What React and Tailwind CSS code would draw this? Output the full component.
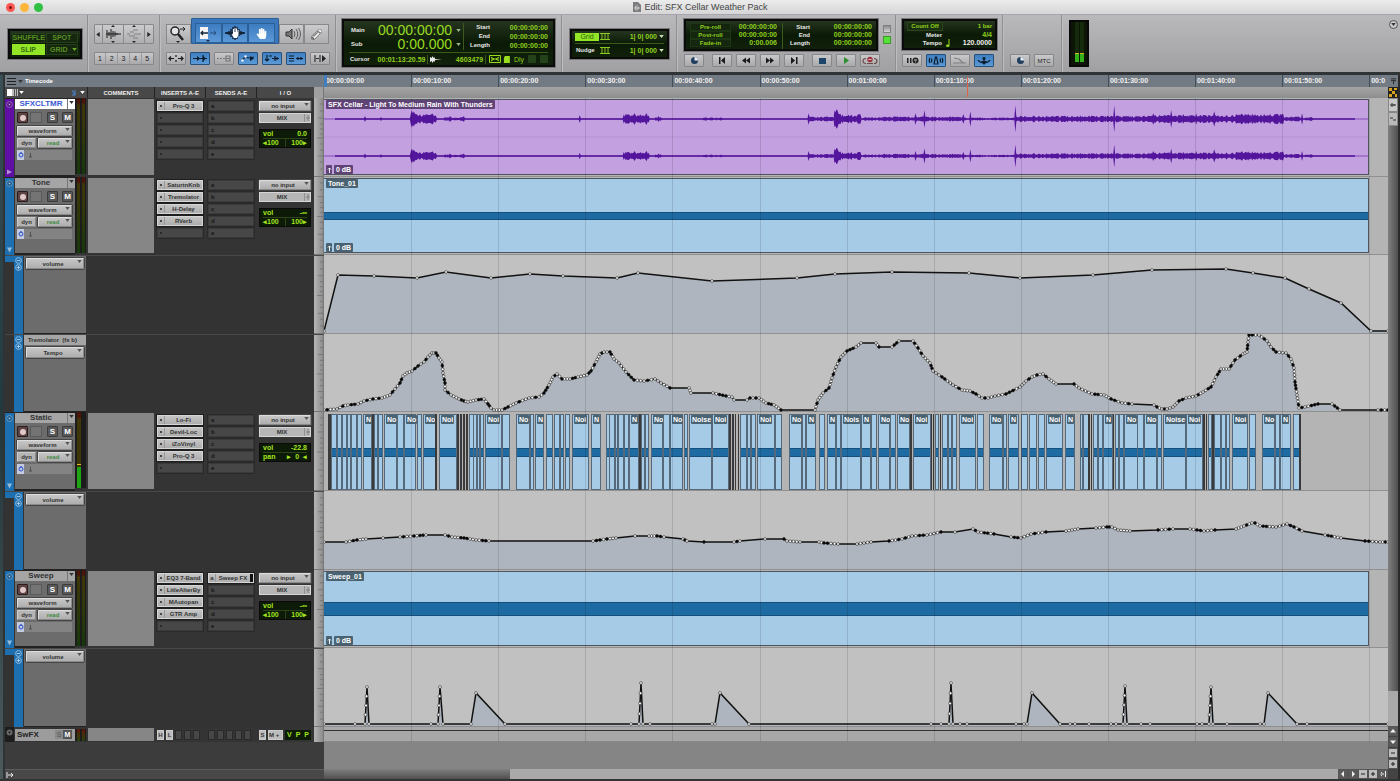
import { FaHandPaper, FaPencilAlt } from "react-icons/fa";

const TIMELINE = 1064;
const TIMES = ["00:00:00:00", "00:00:10:00", "00:00:20:00", "00:00:30:00", "00:00:40:00", "00:00:50:00", "00:01:00:00", "00:01:10:00", "00:01:20:00", "00:01:30:00", "00:01:40:00", "00:01:50:00", "00:0"];
const STEP = 87.1;

const pct = (n) => `${(n / TIMELINE) * 100}%`;

const TONE_VOLUME = [[0, 76], [14, 20], [50, 21], [93, 23], [122, 17], [167, 23], [206, 19], [239, 21], [293, 23], [314, 18], [388, 26], [473, 23], [511, 19], [568, 17], [645, 18], [696, 23], [769, 20], [828, 15], [902, 14], [929, 18], [961, 23], [985, 34], [1017, 48], [1047, 76], [1064, 76]];

const TREMOLO_TEMPO = [[0, 76], [13, 75], [19, 72], [24, 71], [34, 70], [40, 67], [49, 65], [58, 64], [66, 61], [71, 55], [76, 49], [79, 42], [83, 39], [88, 37], [94, 32], [100, 28], [104, 23], [108, 19], [112, 19], [115, 24], [118, 28], [119, 39], [121, 49], [121, 56], [127, 61], [135, 65], [140, 67], [144, 68], [152, 66], [160, 65], [164, 70], [167, 74], [170, 76], [178, 76], [184, 73], [192, 69], [205, 64], [215, 63], [220, 59], [225, 51], [229, 43], [233, 40], [238, 45], [246, 45], [254, 43], [263, 41], [267, 37], [272, 28], [276, 20], [280, 18], [286, 18], [290, 25], [295, 29], [302, 38], [310, 46], [320, 47], [331, 45], [337, 49], [346, 54], [365, 54], [367, 59], [389, 59], [402, 62], [408, 63], [410, 66], [423, 66], [426, 64], [435, 64], [442, 69], [450, 71], [457, 76], [491, 76], [494, 66], [499, 59], [505, 54], [508, 44], [512, 33], [517, 23], [523, 17], [532, 13], [537, 9], [552, 9], [555, 13], [568, 13], [575, 7], [589, 7], [594, 14], [599, 22], [606, 29], [609, 37], [618, 43], [629, 51], [638, 56], [646, 57], [652, 60], [658, 64], [664, 64], [671, 62], [682, 60], [696, 53], [702, 47], [708, 43], [713, 41], [719, 40], [725, 45], [732, 50], [750, 50], [755, 54], [768, 60], [780, 61], [787, 65], [798, 69], [808, 70], [830, 71], [833, 73], [838, 75], [843, 75], [849, 73], [855, 67], [862, 64], [872, 62], [879, 58], [887, 53], [892, 43], [897, 35], [905, 35], [911, 26], [919, 20], [923, 18], [924, 8], [925, 1], [935, 1], [943, 7], [947, 13], [952, 18], [962, 19], [967, 25], [970, 34], [971, 48], [973, 61], [975, 74], [981, 73], [994, 70], [1008, 70], [1016, 76], [1054, 76], [1064, 76]];

const STATIC_VOLUME = [[0, 51], [22, 51], [33, 49], [42, 48], [59, 47], [76, 46], [90, 45], [102, 44], [121, 44], [128, 46], [140, 47], [152, 49], [165, 50], [269, 50], [283, 48], [292, 47], [311, 45], [325, 45], [333, 45], [340, 46], [359, 48], [363, 50], [380, 51], [410, 51], [416, 50], [441, 48], [460, 48], [463, 50], [476, 51], [495, 51], [500, 52], [514, 53], [533, 53], [547, 51], [565, 50], [578, 48], [588, 45], [603, 44], [617, 41], [631, 41], [649, 38], [654, 41], [670, 43], [687, 46], [697, 47], [707, 43], [722, 41], [742, 40], [754, 38], [772, 37], [783, 36], [788, 36], [794, 39], [806, 40], [834, 39], [849, 38], [866, 38], [880, 40], [891, 39], [912, 38], [920, 35], [928, 32], [931, 32], [936, 35], [952, 36], [963, 33], [970, 36], [978, 40], [1001, 44], [1017, 47], [1041, 50], [1056, 51], [1064, 51]];

const SWEEP_VOLUME = [[0, 76], [31, 76], [41, 76], [43, 39], [45, 76], [107, 76], [114, 76], [116, 39], [119, 76], [147, 76], [152, 45], [181, 76], [307, 76], [315, 76], [317, 35], [319, 76], [326, 76], [388, 76], [391, 76], [396, 45], [425, 76], [607, 76], [617, 76], [625, 76], [627, 35], [629, 76], [636, 76], [643, 76], [692, 76], [700, 76], [703, 76], [708, 45], [736, 76], [746, 76], [751, 76], [765, 76], [787, 76], [792, 76], [799, 76], [801, 38], [803, 76], [817, 76], [826, 76], [873, 76], [878, 76], [885, 76], [887, 39], [889, 76], [903, 76], [936, 76], [940, 76], [944, 45], [973, 76], [983, 76], [1064, 76]];

// start, end, and a 1 for crossfade slivers that read as solid dark
const NOISE_CLIPS = [[4, 7, 1], [7, 12], [13, 17], [18, 22], [23, 26], [27, 32], [33, 37], [39, 47], [48, 50, 1], [50, 53], [54, 58], [60, 72], [73, 79], [80, 91], [93, 97], [99, 111], [111, 113, 1], [115, 132], [133, 135, 1], [136, 138, 1], [139, 141, 1], [142, 144, 1], [145, 149], [149, 152], [153, 155], [156, 159], [161, 177], [178, 185], [192, 205], [206, 209], [211, 219], [222, 228], [230, 235], [236, 239], [241, 245], [248, 264], [267, 276], [282, 285], [285, 290], [291, 293], [294, 299], [300, 304], [305, 314], [315, 317, 1], [317, 320], [321, 324], [327, 338], [339, 345], [346, 358], [360, 363], [365, 387], [388, 404], [405, 407, 1], [408, 410, 1], [411, 412, 1], [414, 415, 1], [416, 422], [423, 426], [427, 431], [433, 450], [451, 457], [465, 477], [478, 481], [482, 491], [495, 500], [503, 511], [512, 516], [517, 536], [537, 546], [547, 552], [554, 565], [566, 571], [573, 585], [586, 588, 1], [589, 606], [607, 608, 1], [609, 610, 1], [611, 614], [616, 617, 1], [618, 623], [624, 627], [628, 632], [635, 651], [653, 659], [665, 678], [679, 682], [684, 694], [697, 703], [705, 712], [714, 720], [722, 738], [741, 750], [756, 758], [759, 764], [764, 766, 1], [767, 768, 1], [769, 773], [774, 778], [779, 788], [789, 790, 1], [791, 794], [795, 799], [800, 813], [813, 819], [820, 832], [833, 837], [839, 861], [862, 878], [879, 881, 1], [882, 883, 1], [884, 887], [888, 890, 1], [890, 896], [897, 901], [902, 905], [908, 923], [925, 931], [938, 950], [951, 955], [956, 966], [969, 975], [975, 977, 1]];

function clipLabel(width) {
    if (width < 8) return "";
    if (width < 11) return "N";
    if (width < 15) return "No";
    if (width < 19) return "Noi";
    if (width < 20) return "Nois";
    return "Noise";
}

// [from, to, amplitude]
const ENVELOPE = [[11, 1033, 1], [87, 92, 7], [92, 105, 4], [105, 112, 5], [121, 140, 1.6], [300, 325, 4], [332, 337, 1.8], [380, 398, 1.3], [485, 510, 2], [511, 516, 7], [516, 537, 4.5], [540, 561, 1.6], [561, 642, 2.2], [649, 691, 1.2], [692, 824, 2.8], [824, 912, 3.4], [912, 961, 4.4], [961, 978, 2], [982, 989, 1.8]];
const SPIKES = { 41: 3, 57: 2, 126: 3, 140: 3, 256: 4, 311: 6, 323: 6, 335: 3, 485: 6, 513: 10, 592: 6, 601: 9, 640: 5, 647: 8, 692: 14, 791: 14, 830: 6, 848: 9, 860: 5, 873: 6, 891: 8, 979: 6 };

function wavePath(mid, seed, gain) {
    const amps = [];
    for (let x = 11; x < 1033; x++) {
        let amp = 1;
        ENVELOPE.forEach(([a, b, v]) => {
            if (x >= a && x <= b) amp = v;
        });
        const noise = Math.abs(Math.sin(x * 12.9898 + seed) * 43758.5453) % 1;
        amps.push([x, (SPIKES[x] ?? (amp > 1 ? amp * (0.5 + noise * 0.75) : 0.8)) * gain]);
    }
    const top = amps.map(([x, a]) => `${x} ${(mid - a).toFixed(1)}`);
    const bottom = [...amps].reverse().map(([x, a]) => `${x} ${(mid + a).toFixed(1)}`);
    return `M${top.join("L")}L${bottom.join("L")}Z`;
}

const TRACKS = [
    { name: "SFXCLTMR", color: "bg-[#5f0fa3]", height: "h-[79px]", selected: true, inserts: ["Pro-Q 3"], sends: [], vol: "0.0" },
    { name: "Tone", color: "bg-[#1d6fb0]", height: "h-[78px]", open: true, inserts: ["SaturtnKnb", "Tremolator", "H-Delay", "RVerb"], sends: [], vol: "-∞" },
    { name: "Static", color: "bg-[#1d6fb0]", height: "h-[79px]", open: true, inserts: ["Lo-Fi", "Devil-Loc", "iZoVinyl", "Pro-Q 3"], sends: [], vol: "-22.8", mono: true },
    { name: "Sweep", color: "bg-[#1d6fb0]", height: "h-[78px]", open: true, inserts: ["EQ3 7-Band", "LitleAlterBy", "MAutopan", "GTR Amp"], sends: ["Sweep FX"], vol: "-∞" },
];

function Caret({ className = "fill-[#333]" }) {
    return (
        <svg viewBox="0 0 6 4" className={`h-[3px] w-[5px] shrink-0 ${className}`}>
            <path d="M0 0h6L3 4z" />
        </svg>
    );
}

function Select({ label, value, className = "", text = "text-[#333]" }) {
    return (
        <div className={`relative rounded-[1px] border border-[#ddd] border-r-[#8a8a8a] border-b-[#8a8a8a] bg-linear-to-b from-[#c6c6c6] to-[#aeaeae] shadow-[0_0_0_1px_#444] ${className}`}>
            <select aria-label={label} className={`block h-full w-full appearance-none pr-1 text-center text-[6px] leading-[8px] font-bold outline-none ${text}`}>
                <option>{value}</option>
            </select>
            <span className="pointer-events-none absolute top-px right-px">
                <Caret className="fill-[#555]" />
            </span>
        </div>
    );
}

/* ---------- toolbar ---------- */

function Group({ className = "", children }) {
    return <div className={`flex h-full shrink-0 border-r border-[#8f8f92] shadow-[1px_0_0_#bdbdbf] ${className}`}>{children}</div>;
}

function Lcd({ className = "", children }) {
    return (
        <div className={`border-2 border-[#0a0a0a] bg-linear-to-b from-[#263520] via-[#0b1a06] to-[#10200a] text-[7px] leading-[9px] font-bold text-[#8fd01c] shadow-[0_0_0_1px_#77777a] ${className}`}>
            {children}
        </div>
    );
}

function IconButton({ label, on, children }) {
    return (
        <button
            aria-label={label}
            className={`flex h-[13px] w-[20px] items-center justify-center rounded-[1px] border text-[6px] leading-none font-bold text-[#222] ${
                on ? "border-[#274f7c] bg-linear-to-b from-[#3f7fc0] to-[#5b9ad6]" : "border-[#87878a] bg-linear-to-b from-[#c9c9cb] to-[#a9a9ab]"
            }`}
        >
            {children}
        </button>
    );
}

function Glyph({ d, fill, stroke = "#1a1a1a", children }) {
    return (
        <svg viewBox="0 0 16 9" className="h-[9px] w-[16px] shrink-0">
            {d && <path d={d} fill={fill ?? "none"} stroke={fill ? "none" : stroke} strokeWidth="1.2" />}
            {children}
        </svg>
    );
}

function EditModes() {
    const mode = "flex items-center justify-center gap-px border border-[#24401a] bg-[#16280f] text-[7px] leading-none";
    return (
        <Group className="w-[88px] items-center pl-[8px]">
            <Lcd className="h-[30px] w-[74px] p-[2px]">
                <div className="grid h-full grid-cols-2 gap-px text-[#5b8f22]">
                    <button className={`${mode} text-[6px]`}>
                        <svg viewBox="0 0 4 5" className="h-[5px] w-[4px]"><path d="M0 2h4v3H0z" fill="#5b8f22" /><path d="M1 2V1h2v1" stroke="#5b8f22" fill="none" strokeWidth="0.7" /></svg>
                        SHUFFLE
                    </button>
                    <button className={mode}>SPOT</button>
                    <button className="bg-[#93e626] text-[7px] leading-none text-[#3a6e10]">SLIP</button>
                    <button className={mode}>
                        <span className="flex-1">GRID</span> <Caret className="fill-[#6fae2a]" />
                    </button>
                </div>
            </Lcd>
        </Group>
    );
}

function ZoomControls() {
    const cell = "flex items-center justify-center border-r border-[#8a8a8a] last:border-r-0";
    return (
        <Group className="w-[72px] flex-col items-center pt-[9px]">
            <div className="flex h-[20px] w-[60px] rounded-[1px] border border-[#88888b] bg-linear-to-b from-[#cbcbcd] to-[#aeaeb0]">
                <button aria-label="Zoom out" className={`${cell} w-[8px]`}>
                    <svg viewBox="0 0 4 6" className="h-[5px] w-[4px]"><path d="M4 0v6L0 3z" fill="#222" /></svg>
                </button>
                <button aria-label="Audio zoom" className={`${cell} w-[21px]`}>
                    <svg viewBox="0 0 18 18" className="h-[18px] w-[18px]">
                        <path d="M2 9h15M3 5v8M5 7v4M7 4v10M9 6v6M11 6.500v5M13 8v2" stroke="#1c1c1c" />
                        <path d="M7 2l2-2 2 2zM7 16l2 2 2-2z" fill="#222" />
                    </svg>
                </button>
                <button aria-label="MIDI zoom" className={`${cell} w-[21px]`}>
                    <svg viewBox="0 0 18 18" className="h-[18px] w-[18px]">
                        <path d="M8 5h5M5 7h4M9 9h7M2 9h3M4 11h6M8 13h5" stroke="#808080" />
                        <path d="M7 2l2-2 2 2zM7 16l2 2 2-2z" fill="#222" />
                    </svg>
                </button>
                <button aria-label="Zoom in" className={`${cell} w-[8px]`}>
                    <svg viewBox="0 0 4 6" className="h-[5px] w-[4px]"><path d="M0 0v6l4-3z" fill="#222" /></svg>
                </button>
            </div>
            <div className="mt-[8px] flex h-[13px] w-[60px] rounded-[1px] border border-[#88888b] bg-linear-to-b from-[#c9c9cb] to-[#a9a9ab]">
                {[1, 2, 3, 4, 5].map((n) => (
                    <button key={n} className="flex-1 border-r border-[#9a9a9c] text-[7px] leading-none text-[#222] last:border-r-0">{n}</button>
                ))}
            </div>
        </Group>
    );
}

function EditTools() {
    const light = "flex h-[20px] w-[25px] items-center justify-center border border-[#88888b] bg-linear-to-b from-[#cbcbcd] to-[#aeaeb0]";
    const blue = "flex h-[20px] flex-1 items-center justify-center border border-[#2d5f97] bg-linear-to-b from-[#3d7cc0] to-[#5c99d8]";
    return (
        <Group className="w-[176px] flex-col pt-[3px] pl-[6px]">
            <div className="flex h-[26px] items-end">
                <button aria-label="Zoomer" className={light}>
                    <svg viewBox="0 0 22 18" className="h-[18px] w-[22px]">
                        <circle cx="7" cy="6" r="4" fill="#e4e4e4" stroke="#222" strokeWidth="1.5" />
                        <path d="M10 9l5 6" stroke="#222" strokeWidth="2.5" />
                        <path d="M12 4h5M15 2l2 2-2 2" stroke="#222" fill="none" />
                        <path d="M8 16h4l-2 2z" fill="#222" />
                    </svg>
                </button>
                <div className="flex h-[26px] w-[88px] items-end rounded-t-[1px] border border-[#2d5f97] bg-[#3b78bb] px-[3px]">
                    <button aria-label="Trim" className={blue}>
                        <svg viewBox="0 0 24 18" className="h-[18px] w-[24px]">
                            <rect x="4" y="3" width="8" height="12" fill="#f4f4f4" />
                            <path d="M5 9h7M7 7L5 9l2 2" stroke="#15273d" strokeWidth="1.300" fill="none" />
                            <path d="M14 9h6M18 7l2 2-2 2" stroke="#2a4d78" fill="none" />
                            <path d="M10 16h4l-2 2z" fill="#15273d" />
                        </svg>
                    </button>
                    <button aria-label="Selector" className={blue}>
                        <svg viewBox="0 0 24 18" className="h-[18px] w-[24px]">
                            <path d="M2 9h20M4 8v2M6 7v4M8 5v8M10 3v12M12 2v14M14 3v12M16 5v7M18 7v4M20 8v2" stroke="#111c2a" strokeWidth="1.4" />
                            <path d="M10 9V5h1v3h.5V4h1v4h.5V4.500h1V8h.5V6h1v4.500L14 14h-3l-2-3z" fill="#fff" />
                        </svg>
                    </button>
                    <button aria-label="Grabber" className={blue}>
                        <FaHandPaper className="h-[11px] w-[11px] text-white" />
                    </button>
                </div>
                <button aria-label="Scrubber" className={light}>
                    <svg viewBox="0 0 20 16" className="h-[16px] w-[20px]">
                        <path d="M4 6h3l3-3v10L7 10H4z" fill="#777" stroke="#333" />
                        <path d="M12 5q2 3 0 6M14 3q3.500 5 0 10M16.500 2q4 6 0 12" stroke="#444" strokeWidth="0.800" fill="none" />
                    </svg>
                </button>
                <button aria-label="Pencil" className={light}>
                    <FaPencilAlt className="h-[11px] w-[11px] fill-[#f2f2f2] stroke-[#444] stroke-[30px]" />
                </button>
            </div>
            <div className="mt-[8px] flex gap-[4px]">
                <IconButton label="Zoom toggle"><Glyph d="M1 4.500h5M10 4.500h5M3 2.500l-2 2 2 2M13 2.500l2 2-2 2M8 1v2M8 6v2" /></IconButton>
                <IconButton label="Tab to transients" on>
                    <Glyph d="M1 4.500h14M11 1v7" stroke="#0d1c2e"><path d="M5 2v5l3-2.500zM11 2v5l3-2.500z" fill="#0d1c2e" /></Glyph>
                </IconButton>
                <IconButton label="Mirrored MIDI"><Glyph d="M1 4.500h2M4 4.500h2M7 4.500h2M10 2h4v5h-4zM10 4.500h4" stroke="#777" /></IconButton>
                <IconButton label="Automation follows edit" on>
                    <Glyph d="M2 6.500L5 3l4 1 5-1" stroke="#10233a"><circle cx="2.500" cy="6.500" r="1.300" fill="#eaf3ff" /><circle cx="5.500" cy="2.500" r="1.300" fill="#eaf3ff" /><path d="M10 2v5l4-2.500z" fill="#0d1c2e" /></Glyph>
                </IconButton>
                <IconButton label="Link timeline" on><Glyph d="M3 1v6M1 5l2 2 2-2M5 2h3M8 4.500h7M11 2v5M13 3v3" stroke="#0d1c2e" /></IconButton>
                <IconButton label="Link track" on><Glyph d="M1 2h5M1 4.500h5M1 7h5M8 4.500h7M10 3v3M13 3v3" stroke="#0d1c2e" /></IconButton>
                <IconButton label="Insertion follows playback">
                    <Glyph d="M3 1v7M8 1v7M4 4.500h3" stroke="#333"><path d="M10 1v7l4-3.500z" fill="#222" /></Glyph>
                </IconButton>
            </div>
        </Group>
    );
}

function MainCounter() {
    return (
        <Group className="w-[226px] pt-[4px] pl-[6px]">
            <Lcd className="flex h-[48px] w-[213px] flex-col px-[5px]">
                <div className="flex h-[32px] border-b border-[#3c5a1c]">
                    <div className="flex w-[114px] flex-col pt-[2px]">
                        {[["Main", "00:00:00:00"], ["Sub", "0:00.000"]].map(([label, value]) => (
                            <div key={label} className="flex h-[14px] items-center">
                                <span className="w-[18px] pl-[2px] text-[6px] text-[#e8e8e8]">{label}</span>
                                <span className="flex-1 text-right text-[14px] leading-[14px] font-normal text-[#98dc20]">{value}</span>
                                <span className="w-[11px] pl-[4px]"><Caret className="fill-[#9ab88a]" /></span>
                            </div>
                        ))}
                    </div>
                    <div className="my-[2px] flex flex-1 flex-col border-l border-[#3c5a1c]">
                        {["Start", "End", "Length"].map((label) => (
                            <div key={label} className="flex">
                                <span className="w-[26px] text-right text-[6px] text-[#e8e8e8]">{label}</span>
                                <span className="flex-1 text-right">00:00:00:00</span>
                            </div>
                        ))}
                    </div>
                </div>
                <div className="flex h-[12px] items-center">
                    <span className="w-[26px] pl-px text-[6px] text-[#e8e8e8]">Cursor</span>
                    <span className="w-[54px] border-r border-[#3c5a1c] pr-[2px] text-right">00:01:13:20.59</span>
                    <svg viewBox="0 0 12 9" className="ml-[2px] h-[9px] w-[12px]">
                        <path d="M0 2l2 1V1l2 2 1-1v2l7 .5-7 .5v2L4 6 2 8V6L0 7z" fill="#e8e8e8" />
                    </svg>
                    <span className="w-[44px] border-r border-[#3c5a1c] pr-[2px] text-right">4603479</span>
                    <svg viewBox="0 0 22 9" className="ml-[3px] h-[9px] w-[22px]">
                        <path d="M.5.5h11v7H.5zM2 2l3 2-3 2M10 2L7 4l3 2M2 4h8" fill="none" stroke="#9ade1e" />
                        <path d="M16 1h5v7h-6V3z" fill="#9ade1e" />
                    </svg>
                    <span className="ml-[3px] font-normal">Dly</span>
                    <span className="ml-[4px] h-[8px] w-[8px] rounded-[1px] bg-[#24421a]" />
                    <span className="ml-[4px] h-[8px] w-[8px] rounded-[1px] bg-[#24421a]" />
                </div>
            </Lcd>
        </Group>
    );
}

function GridNudge() {
    const row = "flex h-[13px] items-center";
    return (
        <Group className="w-[115px] items-center pl-[8px]">
            <Lcd className="h-[30px] w-[99px] px-[3px]">
                <div className={`${row} border-b border-[#3c5a1c]`}>
                    <button className="h-[8px] w-[24px] bg-[#93e626] text-[7px] leading-[8px] font-normal text-[#2c5a0c]">Grid</button>
                    <GridIcon />
                    <span className="flex-1 text-right">1| 0| 000</span>
                    <span className="ml-[2px]"><Caret className="fill-[#cfe0c0]" /></span>
                </div>
                <div className={row}>
                    <span className="w-[24px] pl-px text-[6px] text-[#e8e8e8]">Nudge</span>
                    <GridIcon />
                    <span className="flex-1 text-right">1| 0| 000</span>
                    <span className="ml-[2px]"><Caret className="fill-[#cfe0c0]" /></span>
                </div>
            </Lcd>
        </Group>
    );
}

function GridIcon() {
    return (
        <svg viewBox="0 0 10 7" className="ml-px h-[7px] w-[10px]">
            <path d="M0 .5h10M0 6.500h10M2 0v7M5 0v7M8 0v7" stroke="#8cc822" />
        </svg>
    );
}

function Transport() {
    return (
        <Group className="w-[219px] flex-col pt-[4px] pl-[7px]">
            <div className="flex">
                <Lcd className="flex h-[32px] w-[194px] px-[4px] pt-[2px]">
                    <div className="flex w-[93px] flex-col border-r border-[#3c5a1c]">
                        {[["Pre-roll", "00:00:00:00"], ["Post-roll", "00:00:00:00"], ["Fade-in", "0:00.006"]].map(([label, value]) => (
                            <div key={label} className="flex h-[8px] items-center">
                                <button className="h-[8px] w-[41px] border border-[#1c3512] bg-[#14260d] text-center text-[6px] leading-[6px]">{label}</button>
                                <span className="flex-1 pr-[5px] text-right leading-[8px]">{value}</span>
                            </div>
                        ))}
                    </div>
                    <div className="flex flex-1 flex-col">
                        {["Start", "End", "Length"].map((label) => (
                            <div key={label} className="flex h-[8px] leading-[8px]">
                                <span className="w-[27px] text-right text-[6px] text-[#e8e8e8]">{label}</span>
                                <span className="flex-1 text-right">00:00:00:00</span>
                            </div>
                        ))}
                    </div>
                </Lcd>
                <div className="mt-[6px] ml-[5px] flex flex-col gap-[3px]">
                    <span className="h-[8px] w-[8px] border border-[#808083] bg-linear-to-b from-[#8c8c8e] to-[#d4d4d6]" />
                    <span className="h-[8px] w-[8px] border border-[#3f9a2c] bg-[#55e03a]" />
                </div>
            </div>
            <div className="mt-[3px] flex gap-[4px]">
                <IconButton label="Online"><ClockIcon /></IconButton>
                <span className="w-0" />
                <IconButton label="Return to zero"><Glyph d="M5 1h1.500v7H5zM11 1v7L7 4.500z" fill="#1a1a1a" /></IconButton>
                <IconButton label="Rewind"><Glyph d="M8 1.500v6L4 4.500zM12 1.500v6L8 4.500z" fill="#1a1a1a" /></IconButton>
                <IconButton label="Fast forward"><Glyph d="M4 1.500v6l4-3zM8 1.500v6l4-3z" fill="#1a1a1a" /></IconButton>
                <IconButton label="Go to end"><Glyph d="M10 1h1.500v7H10zM5 1v7l4-3.500z" fill="#1a1a1a" /></IconButton>
                <span className="w-0" />
                <IconButton label="Stop"><span className="h-[6px] w-[7px] bg-[#1c4468]" /></IconButton>
                <IconButton label="Play"><Glyph d="M6 1v7l5-3.500z" fill="#2a8f2c" /></IconButton>
                <IconButton label="Record">
                    <Glyph d="M4 7.500Q1 7.500 1 5t3-2.500M12 7.500q3 0 3-2.500t-3-2.500M5 7.500h6" stroke="#6b4a4a"><circle cx="8" cy="3.500" r="2.700" fill="#9c2f40" /><path d="M6.500 3.500h3" stroke="#e0b8b8" /></Glyph>
                </IconButton>
            </div>
        </Group>
    );
}

function ClockIcon() {
    return (
        <svg viewBox="0 0 9 9" className="h-[9px] w-[9px]">
            <circle cx="4.500" cy="4.500" r="3.500" fill="#1f3d5c" />
            <path d="M4.500 4.500V1A3.500 3.500 0 0 1 8 4.500z" fill="#e8eef4" />
        </svg>
    );
}

function TempoPanel() {
    return (
        <Group className="w-[107px] flex-col pt-[4px] pl-[6px]">
            <Lcd className="h-[31px] w-[95px] px-[3px] pt-px">
                <div className="flex justify-between leading-[9px]">
                    <button className="h-[9px] w-[36px] border border-[#2a451c] bg-[#1a2f12] text-[6px] leading-[7px]">Count Off</button>
                    <span className="text-[6px]">1 bar</span>
                </div>
                <div className="flex justify-between leading-[8px]">
                    <span className="w-[35px] text-right text-[6px] text-[#e8e8e8]">Meter</span>
                    <span>4/4</span>
                </div>
                <div className="flex items-center justify-between leading-[8px] text-[#f0f0f0]">
                    <span className="w-[35px] text-right text-[6px]">Tempo</span>
                    <svg viewBox="0 0 4 8" className="mr-[8px] h-[8px] w-[4px]"><path d="M3 0v6.500" stroke="#9ade1e" /><ellipse cx="1.700" cy="6.700" rx="1.700" ry="1.200" fill="#9ade1e" /></svg>
                    <span>120.0000</span>
                </div>
            </Lcd>
            <div className="mt-[4px] flex gap-[4px]">
                <IconButton label="Wait for note"><Glyph d="M3 2h1.500v5H3zM6 2h1.500v5H6z" fill="#222"><circle cx="11.500" cy="4.500" r="3" fill="#222" /><path d="M10 4h3M11 6h1" stroke="#ccc" /></Glyph></IconButton>
                <IconButton label="Metronome" on><Glyph d="M6 8h4L8.500 1h-1zM4 2.500q-1 2 0 4M2 2q-1.500 2.500 0 5M12 2.500q1 2 0 4M14 2q1.500 2.500 0 5" stroke="#0d1c2e" /></IconButton>
                <IconButton label="MIDI merge"><Glyph d="M1 7h13M2 2l5 1 4 4" stroke="#808083" /></IconButton>
                <IconButton label="Conductor" on><Glyph d="M2 4q2 3 6 3t6-3M8 1v6" stroke="#0d1c2e"><circle cx="8" cy="2.500" r="1.500" fill="#0d1c2e" /><path d="M5 5h6L8 9z" fill="#0d1c2e" /></Glyph></IconButton>
            </div>
        </Group>
    );
}

function Toolbar() {
    return (
        <div className="flex h-[57px] bg-linear-to-b from-[#b9b9bc] to-[#a0a0a3]">
            <EditModes />
            <ZoomControls />
            <EditTools />
            <MainCounter />
            <GridNudge />
            <Transport />
            <TempoPanel />
            <Group className="w-[59px] items-end gap-[4px] pb-[5px] pl-[7px]">
                <IconButton label="Sync"><ClockIcon /></IconButton>
                <IconButton label="Generate MTC"><span className="font-normal">MTC</span></IconButton>
            </Group>
            <div className="flex min-w-0 flex-1 justify-between pt-[5px] pl-[7px]">
                <div className="flex h-[47px] w-[20px] items-end justify-center gap-px border-2 border-[#080808] bg-[#0c1506] px-[3px] pb-[3px]">
                    <span className="flex h-full w-[4px] items-end bg-[#162a0c]"><span className="h-[9px] w-full border-t border-[#d8b020] bg-[#34b01c]" /></span>
                    <span className="flex h-full w-[4px] items-end bg-[#162a0c]"><span className="h-[9px] w-full border-t border-[#d8b020] bg-[#34b01c]" /></span>
                </div>
                <button aria-label="Toolbar menu" className="mr-[2px] flex h-[9px] w-[9px] items-center justify-center rounded-full border border-[#555] bg-[#c8c8c8]">
                    <Caret />
                </button>
            </div>
        </div>
    );
}

/* ---------- track headers ---------- */

function Circle({ sign }) {
    return (
        <button aria-label={sign === "+" ? "Add lane" : "Remove lane"} className="block">
            <svg viewBox="0 0 8 8" className="h-[7px] w-[7px]">
                <circle cx="4" cy="4" r="3.300" fill="none" stroke="#9fc4e2" />
                <path d={sign === "+" ? "M2 4h4M4 2v4" : "M2 4h4"} stroke="#b7d5ec" />
            </svg>
        </button>
    );
}

function Meter({ mono }) {
    if (mono) {
        return (
            <div className="flex h-[76px] w-[11px] shrink-0 bg-[#1c1c1c] pl-[2px]">
                <div className="flex h-full w-[4px] flex-col justify-end bg-linear-to-b from-[#4a1408] from-6% via-[#3f3608] via-10% to-[#3a3408]">
                    <span className="mb-[2px] h-px bg-[#d8c020]" />
                    <span className="h-[21px] bg-[#1fa512]" />
                </div>
            </div>
        );
    }
    return (
        <div className="flex h-[76px] w-[11px] shrink-0 justify-center gap-[2px] bg-[#1c1c1c]">
            <div className="h-full w-[3px] bg-linear-to-b from-[#4a1408] from-6% via-[#3f3608] via-10% to-[#14380c]" />
            <div className="h-full w-[3px] bg-linear-to-b from-[#4a1408] from-6% via-[#3f3608] via-10% to-[#14380c]" />
        </div>
    );
}

function ScaleColumn() {
    return (
        <div className="w-[10px] shrink-0 border-r border-b border-[#777] bg-linear-to-r from-[#b5b5b5] to-[#8c8c8c]">
            <svg viewBox="0 0 9 78" preserveAspectRatio="none" className="h-full w-full">
                <path d="M6 6h3M6 13h3M4 20h5M6 26h3M6 31h3M6 36h3M3 40h6M6 46h3M6 52h3M4 58h5M6 64h3M6 71h3" stroke="#666" strokeWidth="0.600" />
            </svg>
        </div>
    );
}

function Slot({ label, text, send }) {
    const mark = send ? label : <span className="block h-[2px] w-[2px] rounded-full bg-[#222]" />;
    if (!text) {
        return (
            <button aria-label={`Slot ${label}`} className="flex h-[10px] w-full items-center border border-[#3a3a3a] bg-[#474747] pl-[2px] text-[6px] leading-[8px] font-bold text-[#161616] shadow-[0_0_0_1px_#2a2a2a]">
                {mark}
            </button>
        );
    }
    return (
        <button className="flex h-[10px] w-full items-center border border-[#d6d6d6] bg-linear-to-b from-[#c4c4c4] to-[#adadad] text-[6px] leading-[8px] font-bold text-[#333] shadow-[0_0_0_1px_#1e1e1e]">
            <span className="flex h-full w-[7px] shrink-0 items-center justify-center border-r border-[#999]">{mark}</span>
            <span className="flex-1 text-center whitespace-nowrap">{text}</span>
            {send && <span className="h-[8px] w-[3px] bg-[#111]" />}
        </button>
    );
}

function TrackHeader({ track }) {
    const rows = ["a", "b", "c", "d", "e"];
    return (
        <div className={`flex w-[319px] shrink-0 bg-[#343434] ${track.height}`}>
            <div className={`flex w-[9px] shrink-0 flex-col items-center justify-between border-t border-[#222] py-[2px] ${track.color}`}>
                <svg viewBox="0 0 8 8" className="h-[7px] w-[7px]"><circle cx="4" cy="4" r="3.300" fill="#00000033" stroke="#ffffff66" /><path d="M2.500 3h3L4 5.500z" fill="#ffffffaa" /></svg>
                <svg viewBox="0 0 6 6" className="h-[6px] w-[5px]"><path d={track.open ? "M0 0h6L3 6z" : "M0 0l6 3-6 3z"} fill="#ffffff88" /></svg>
            </div>
            <div className="ml-px flex w-[60px] shrink-0 flex-col bg-[#6c6c6c] shadow-[inset_0_-2px_0_#222,inset_0_1px_0_#222]">
                <div className={`mt-px flex h-[10px] items-center ${track.selected ? "bg-white" : "bg-[#a5a5a5]"}`}>
                    <span className={`flex-1 text-center text-[8px] leading-[10px] font-bold ${track.selected ? "text-[#3a5ad2]" : "text-[#333]"}`}>{track.name}</span>
                    <span className="flex h-full items-start border-l border-[#777] px-px pt-[2px]"><Caret /></span>
                </div>
                <div className="mt-[3px] flex h-[11px] items-center pl-[2px]">
                    <button aria-label="Record enable" className="flex h-[11px] w-[11px] items-center justify-center rounded-[1px] border border-[#2c1c1c] bg-[#5c4444]">
                        <span className="h-[6px] w-[6px] rounded-full bg-[#e0c8c8]" />
                    </button>
                    <button aria-label="Input monitor" className="ml-[2px] h-[11px] w-[12px] border border-[#5a5a5a] bg-[#747474]" />
                    <button className="ml-[5px] h-[11px] w-[11px] rounded-[1px] border border-[#3c3c3c] bg-[#585858] text-[8px] leading-[9px] font-bold text-white">S</button>
                    <button className="ml-[4px] h-[11px] w-[11px] rounded-[1px] border border-[#3c3c3c] bg-[#585858] text-[8px] leading-[9px] font-bold text-white">M</button>
                </div>
                <div className="mt-[3px] pl-[2px]"><Select label="Track view" value="waveform" className="h-[10px] w-[55px]" /></div>
                <div className="mt-[2px] flex gap-[2px] pl-[2px]">
                    <button className="h-[10px] w-[19px] border border-[#ccc] border-r-[#888] border-b-[#888] bg-[#b4b4b4] text-[6px] leading-[8px] font-bold text-[#333]">dyn</button>
                    <Select label="Automation mode" value="read" className="h-[10px] w-[34px]" text="text-[#3f8a3f]" />
                </div>
                <div className="mt-[2px] flex h-[10px] pl-[2px]">
                    <button aria-label="Timebase" className="flex h-[10px] w-[7px] items-center justify-center bg-[#c4cbe0]">
                        <svg viewBox="0 0 6 8" className="h-[8px] w-[6px]"><circle cx="3" cy="4" r="2" fill="none" stroke="#2d50c8" /><path d="M3 1v2" stroke="#2d50c8" /></svg>
                    </button>
                    <span className="flex w-[48px] items-center bg-[#838383] pl-[4px]">
                        <svg viewBox="0 0 5 6" className="h-[6px] w-[5px]"><path d="M1 5h3M2.500 1v4" stroke="#444" strokeWidth="0.800" /></svg>
                    </span>
                </div>
            </div>
            <Meter mono={track.mono} />
            <div className="mt-px mb-[2px] ml-[2px] w-[66px] shrink-0 bg-[#868686]" />
            <div className="ml-[3px] flex w-[46px] shrink-0 flex-col gap-[2px] pt-[3px]">
                {rows.map((r, i) => <Slot key={r} label={r} text={track.inserts[i]} />)}
            </div>
            <div className="ml-[5px] flex w-[46px] shrink-0 flex-col gap-[2px] pt-[3px]">
                {rows.map((r, i) => <Slot key={r} label={r} text={track.sends[i]} send />)}
            </div>
            <div className="ml-[5px] flex w-[52px] shrink-0 flex-col pt-[3px]">
                <Select label="Input" value="no input" className="h-[10px]" />
                <button className="mt-[2px] flex h-[10px] items-center border border-[#d6d6d6] bg-[#b6b6b6] text-[6px] leading-[8px] font-bold text-[#333]">
                    <span className="flex-1">MIX</span>
                    <span className="flex h-full w-[6px] items-center justify-center border-l border-[#909090]">
                        <svg viewBox="0 0 4 6" className="h-[6px] w-[4px]"><path d="M2 0v6M0 3h4" stroke="#777" strokeWidth="0.800" /></svg>
                    </span>
                </button>
                <div className="mt-[6px] h-[19px] border border-[#0a0a0a] bg-[#0e1a08] px-[3px] text-[7px] leading-[8px] font-bold text-[#a2e61e]">
                    <div className="flex h-[9px] items-center justify-between border-b border-[#2c4416]"><span>vol</span><span>{track.vol}</span></div>
                    {track.mono ? (
                        <div className="flex justify-between"><span>pan</span><span>▸&nbsp; 0 &nbsp;◂</span></div>
                    ) : (
                        <div className="flex justify-between"><span>◂100</span><span className="h-[8px] w-px bg-[#2c4416]" /><span>100▸</span></div>
                    )}
                </div>
            </div>
            <div className="flex-1" />
            <ScaleColumn />
        </div>
    );
}

function AutomationHeader({ title, param, height }) {
    return (
        <div className={`flex w-[319px] shrink-0 border-t border-[#484848] bg-[#333] ${height}`}>
            <div className="w-[9px] shrink-0"><div className={`h-[6px] w-full ${title ? "bg-[#333]" : "bg-[#1d6fb0]"}`} /></div>
            <div className="flex w-[9px] shrink-0 flex-col items-center bg-[#1d6fb0] pt-px">
                <Circle sign="-" />
                <Circle sign="+" />
            </div>
            <div className="ml-px w-[62px] shrink-0 bg-[#6c6c6c] shadow-[inset_0_-1px_0_#222]">
                {title && <div className="h-[10px] bg-[#a5a5a5] pl-[4px] text-[6px] leading-[10px] font-bold whitespace-pre text-[#333]">{title}</div>}
                <div className="px-[2px] pt-[2px]"><Select label="Automation parameter" value={param} className="h-[11px] w-[58px]" /></div>
            </div>
            <div className="flex-1" />
            <ScaleColumn />
        </div>
    );
}

/* ---------- timeline lanes ---------- */

function Lane({ dim, children }) {
    return <div className={`relative min-w-0 flex-1 shadow-[inset_0_-1px_0_#909090] ${dim ? "bg-[#b4b4b4]" : "bg-[#c1c1c1]"}`}>{children}</div>;
}

function markers(points, dense) {
    const out = [];
    points.forEach(([x, y], i) => {
        out.push([x, y, dense && i % 4 === 2]);
        const next = points[i + 1];
        if (!next) return;
        const dx = next[0] - x;
        const dy = next[1] - y;
        const len = Math.hypot(dx, dy);
        let n = Math.floor(len / 4);
        if (!dense) {
            // breakpoints climbing a narrow spike
            if (dx > 3 || dy > -30) return;
            n = 3;
        } else if (len > 17 || (Math.abs(dy) < 1 && len > 12)) {
            return;
        }
        for (let k = 1; k <= n; k++) {
            const f = k / (n + 1);
            out.push([x + dx * f, y + dy * f, dense && (i * 3 + k) % 5 < 2]);
        }
    });
    return out;
}

function Automation({ points, height, dense }) {
    const line = points.map(([x, y]) => `${x},${y}`).join(" ");
    return (
        <Lane>
            <svg viewBox={`0 0 ${TIMELINE} ${height}`} preserveAspectRatio="none" className="absolute inset-0 h-full w-full">
                <polygon points={`0,${height - 1} ${line} ${TIMELINE},${height - 1}`} fill="#aeb5be" />
                <polyline points={line} fill="none" stroke="#111" strokeWidth="1.500" />
                {markers(points, dense).map(([x, y, solid], i) => (
                    <circle key={i} cx={x} cy={y} r="1.400" fill={solid ? "#000" : "#fff"} stroke="#222" strokeWidth="0.600" />
                ))}
            </svg>
        </Lane>
    );
}

function Tag({ children, tone = "bg-[#4a6373]" }) {
    return <span className={`rounded-[1px] px-[2px] text-[7px] leading-[9px] font-bold whitespace-nowrap text-white ${tone}`}>{children}</span>;
}

function Clip({ name, band, purple }) {
    const tone = purple ? "bg-[#5f4376]" : "bg-[#4a6373]";
    return (
        <Lane dim>
            <div
                className={`absolute top-px bottom-[2px] left-0 flex flex-col justify-between overflow-hidden border-t border-r border-b border-[#4f5560] ${purple ? "bg-[#c3a0e0]" : "bg-[#a6cbe6]"}`}
                style={{ width: pct(1045) }}
            >
                {purple ? (
                    <svg viewBox="0 0 1045 76" preserveAspectRatio="none" className="absolute inset-0 h-full w-full">
                        <path d="M0 38h1045" stroke="#b190d0" strokeWidth="0.700" />
                        <path d="M0 19.500h1045M0 57.500h1045" stroke="#53159b" strokeWidth="0.600" />
                        <path d={wavePath(19.5, 1, 1)} fill="#53159b" />
                        <path d={wavePath(57.5, 1, 0.85)} fill="#53159b" />
                    </svg>
                ) : (
                    <div className={`absolute inset-x-0 top-1/2 -translate-y-1/2 border-y border-[#174f7c] bg-[#1e6aa3] ${band}`} />
                )}
                <div className="relative flex pl-[2px]"><Tag tone={tone}>{name}</Tag></div>
                <div className="relative flex gap-[2px] pl-[2px]">
                    <span className={`flex w-[6px] items-center justify-center rounded-[1px] ${tone}`}>
                        <svg viewBox="0 0 5 8" className="h-[8px] w-[5px]"><path d="M2.500 2v5M1 3.500L2.500 2 4 3.500" fill="none" stroke="#fff" strokeWidth="0.900" /></svg>
                    </span>
                    <Tag tone={tone}>0 dB</Tag>
                </div>
            </div>
        </Lane>
    );
}

function NoiseClips() {
    return (
        <Lane dim>
            {NOISE_CLIPS.map(([from, to, dark]) => {
                const label = clipLabel(to - from);
                return (
                    <div
                        key={from}
                        className={`absolute top-[2px] bottom-px flex items-center ${dark ? "bg-[#3a3a3a]" : "border border-[#55697a] bg-[#a6cbe6]"}`}
                        style={{ left: pct(from), width: pct(dark ? to - from : to - from + 0.7) }}
                    >
                        {!dark && <div className="h-[9px] w-full border-y border-[#174f7c] bg-[#1e6aa3]" />}
                        {label && <span className="absolute top-0 left-px rounded-[1px] bg-[#4a6373] px-px text-[7px] leading-[9px] font-bold text-white">{label}</span>}
                    </div>
                );
            })}
        </Lane>
    );
}

function Ruler() {
    return (
        <div className="relative h-[12px] min-w-0 flex-1 overflow-hidden bg-[#727b83]">
            {TIMES.map((time, i) => (
                <span key={time} className="absolute top-0 h-full border-l border-[#454c52] pl-px text-[7px] leading-[11px] font-bold text-[#f2f2f2]" style={{ left: pct(i * STEP) }}>
                    {time}
                </span>
            ))}
        </div>
    );
}

function GridLines() {
    return (
        <div className="pointer-events-none absolute inset-y-0 right-0 left-[319px]">
            {TIMES.slice(1).map((time, i) => (
                <span key={time} className="absolute inset-y-0 w-px bg-black/12" style={{ left: pct((i + 1) * STEP) }} />
            ))}
        </div>
    );
}

function AuxTrack() {
    const mini = "h-[10px] border border-[#ccc] bg-[#bcbcbc] text-[6px] leading-[8px] font-bold text-[#333]";
    return (
        <div className="flex h-[15px]">
            <div className="flex w-[319px] shrink-0 items-center bg-[#343434]">
                <div className="flex h-full w-[9px] shrink-0 justify-center bg-[#1d1d1d] pt-[2px]">
                    <svg viewBox="0 0 8 8" className="h-[7px] w-[7px]"><circle cx="4" cy="4" r="3.500" fill="#666" /><path d="M2.500 3h3L4 5.500z" fill="#111" /></svg>
                </div>
                <div className="ml-px flex h-[12px] w-[60px] shrink-0 items-center bg-[#9c9c9c] pl-[2px]">
                    <span className="flex-1 text-[8px] leading-[10px] font-bold text-[#222]">SwFX</span>
                    <button className="h-[9px] w-[8px] bg-[#8a8a8a] text-[7px] leading-[9px] text-[#555]">S</button>
                    <button className="mr-[3px] h-[9px] w-[9px] bg-[#555] text-[7px] leading-[9px] font-bold text-white">M</button>
                </div>
                <div className="flex h-[12px] w-[11px] shrink-0 justify-center gap-[2px] bg-[#1c1c1c]">
                    <span className="w-[3px] bg-linear-to-b from-[#5a1408] to-[#26400c]" />
                    <span className="w-[3px] bg-linear-to-b from-[#5a1408] to-[#26400c]" />
                </div>
                <div className="ml-[2px] h-[13px] w-[66px] shrink-0 bg-[#868686]" />
                <div className="ml-[3px] flex w-[46px] shrink-0 gap-[2px]">
                    <button className={`${mini} w-[7px]`}>H</button>
                    <button className={`${mini} w-[7px]`}>L</button>
                    {[1, 2, 3].map((n) => <span key={n} className="h-[10px] w-[7px] border border-[#2a2a2a] bg-[#474747]" />)}
                </div>
                <div className="ml-[5px] flex w-[46px] shrink-0 gap-[2px]">
                    {[1, 2, 3, 4, 5].map((n) => <span key={n} className="h-[10px] w-[7px] border border-[#2a2a2a] bg-[#474747]" />)}
                </div>
                <div className="ml-[5px] flex w-[52px] shrink-0 items-center gap-[2px]">
                    <button className={`${mini} w-[7px]`}>S</button>
                    <button className={`${mini} w-[15px] text-left`}>M +</button>
                    <span className="flex h-[10px] flex-1 justify-around bg-[#0e1a08] text-[7px] leading-[10px] font-bold text-[#a2e61e]"><span>V</span><span>P</span><span>P</span></span>
                </div>
                <div className="flex-1" />
                <div className="h-full w-[10px] border-r border-[#777] bg-linear-to-r from-[#b5b5b5] to-[#8c8c8c]" />
            </div>
            <div className="min-w-0 flex-1 border-b border-[#888] bg-[#a8a8a8] pt-[3px]"><div className="h-px bg-[#33332e]" /></div>
        </div>
    );
}

function EditWindow() {
    const head = "shrink-0 border-l border-[#222] bg-[#484848] text-center";
    return (
        <div className="flex min-w-0 flex-1 flex-col">
            <div className="flex h-[12px]">
                <div className="flex w-[319px] shrink-0 items-center gap-[2px] bg-[#727b83] pl-[2px] text-[6px] leading-[12px] font-bold text-white">
                    <svg viewBox="0 0 9 7" className="h-[7px] w-[9px]"><path d="M0 .5h9M0 3.500h9M0 6.500h9" stroke="#222" strokeWidth="1.200" /></svg>
                    <Caret />
                    <span className="flex-1">Timecode</span>
                </div>
                <Ruler />
            </div>
            <div className="flex h-[11px] text-[6px] leading-[12px] font-bold text-[#eee]">
                <div className="flex w-[82px] shrink-0 items-center justify-between bg-[#484848] px-[2px]">
                    <span className="flex items-center gap-px">
                        <svg viewBox="0 0 11 7" className="h-[7px] w-[11px]"><path d="M0 0h11v7H0z" fill="#bbb" /><path d="M0 0h5v7H0z" fill="#fff" /><path d="M7.500 0v7M9.500 0v7" stroke="#555" /></svg>
                        <Caret className="fill-white" />
                    </span>
                    <span className="flex items-center gap-[4px]">
                        <svg viewBox="0 0 5 7" className="h-[7px] w-[5px]"><path d="M1 1l3 5M4 1v5M1 6h3" stroke="#4a86d8" fill="none" /></svg>
                        <Caret className="fill-white" />
                    </span>
                </div>
                <span className={`${head} w-[67px]`}>COMMENTS</span>
                <span className={`${head} w-[51px]`}>INSERTS A-E</span>
                <span className={`${head} w-[51px]`}>SENDS A-E</span>
                <span className={`${head} w-[58px]`}>I / O</span>
                <div className="w-[10px] shrink-0 border-r border-[#777] bg-[#a0a0a0]" />
                <div className="min-w-0 flex-1 bg-linear-to-b from-[#a4a4a4] to-[#8e8e8e]" />
            </div>
            <div className="relative">
                <div className="flex"><TrackHeader track={TRACKS[0]} /><Clip name="SFX Cellar - Light To Medium Rain With Thunders" purple /></div>
                <div className="flex"><TrackHeader track={TRACKS[1]} /><Clip name="Tone_01" band="h-[8px]" /></div>
                <div className="flex"><AutomationHeader param="volume" height="h-[79px]" /><Automation points={TONE_VOLUME} height={79} /></div>
                <div className="flex"><AutomationHeader title="Tremolator  (fx b)" param="Tempo" height="h-[78px]" /><Automation points={TREMOLO_TEMPO} height={78} dense /></div>
                <div className="flex"><TrackHeader track={TRACKS[2]} /><NoiseClips /></div>
                <div className="flex"><AutomationHeader param="volume" height="h-[79px]" /><Automation points={STATIC_VOLUME} height={79} dense /></div>
                <div className="flex"><TrackHeader track={TRACKS[3]} /><Clip name="Sweep_01" band="h-[14px]" /></div>
                <div className="flex"><AutomationHeader param="volume" height="h-[79px]" /><Automation points={SWEEP_VOLUME} height={79} /></div>
                <AuxTrack />
                <GridLines />
            </div>
            <div className="flex min-h-[27px] flex-1">
                <div className="w-[319px] shrink-0 bg-[#3c3c3c]" />
                <div className="flex-1 bg-[#858585]" />
            </div>
            <div className="flex h-[10px]">
                <div className="flex w-[319px] shrink-0 items-center border-t border-[#5c5c5c] bg-[#484848] pl-px">
                    <svg viewBox="0 0 8 8" className="h-[8px] w-[8px]"><path d="M1 1v6M2 4h5M5 2l2 2-2 2" stroke="#eee" fill="none" /></svg>
                </div>
                <div className="flex min-w-0 flex-1 bg-[#a9a9a9]">
                    <div className="w-[17.5%] shrink-0 bg-linear-to-b from-[#808080] to-[#505050]" />
                    <div className="flex-1" />
                    <ScrollButton label="Scroll left" d="M5 1v6L2 4z" dark />
                    <ScrollButton label="Scroll right" d="M3 1v6l3-3z" dark />
                    <ScrollButton label="Zoom out horizontally" d="M2 3.500h4v1H2z" />
                    <ScrollButton label="Zoom in horizontally" d="M3.500 2h1v1.500H6v1H4.500V6h-1V4.500H2v-1h1.500z" />
                    <ScrollButton label="Show lists" d="M1 3.500h4v1H1zM3 1.500L1 4l2 2.500zM6 1h1v6H6z" dark />
                </div>
            </div>
        </div>
    );
}

function ScrollButton({ label, d, dark }) {
    return (
        <button aria-label={label} className={`flex h-[10px] w-[10px] shrink-0 items-center justify-center border border-[#555] ${dark ? "bg-[#5a5a5a]" : "bg-[#bdbdbd]"}`}>
            <svg viewBox="0 0 8 8" className="h-[8px] w-[8px] shrink-0"><path d={d} fill={dark ? "#f0f0f0" : "#222"} /></svg>
        </button>
    );
}

function VerticalScroll() {
    return (
        <div className="flex w-[10px] shrink-0 flex-col bg-[#a9a9a9]">
            <div className="flex h-[12px] items-center justify-center bg-[#727b83]"><svg viewBox="0 0 8 8" className="h-[7px] w-[7px]"><path d="M1 1h6M1 3h6M4 3v4" stroke="#222" fill="none" /></svg></div>
            <svg viewBox="0 0 10 11" className="h-[11px] w-[10px]"><path d="M0 0h10v11H0z" fill="#222" /><path d="M1 1h3v3H1zM6 1h3v2H6zM4 4h3v3H4zM1 7h3v3H1zM7 7h2v3H7z" fill="#d9a520" /></svg>
            <button aria-label="Waveform height" className="flex h-[14px] items-center justify-center border border-[#888] bg-[#c8c8c8]"><svg viewBox="0 0 8 8" className="h-[8px] w-[8px]"><path d="M1 4h6M3 2v4M5 3v2" stroke="#333" /></svg></button>
            <button aria-label="Note height" className="flex h-[14px] items-center justify-center border border-[#888] bg-[#bababa]"><svg viewBox="0 0 8 8" className="h-[8px] w-[8px]"><path d="M1 3h3M4 5h3" stroke="#333" /></svg></button>
            <div className="min-h-[40px] flex-1 bg-linear-to-r from-[#808080] to-[#505050]" />
            <div className="h-[35px]" />
            <div className="flex flex-col gap-px bg-[#444]">
                <ScrollButton label="Scroll up" d="M1 5.500h6L4 2z" dark />
                <ScrollButton label="Scroll down" d="M1 2.500h6L4 6z" dark />
                <ScrollButton label="Zoom out vertically" d="M2 3.500h4v1H2z" />
                <ScrollButton label="Zoom in vertically" d="M3.500 2h1v1.500H6v1H4.500V6h-1V4.500H2v-1h1.500z" />
                <span className="h-[9px]" />
            </div>
        </div>
    );
}

export default function App() {
    return (
        <div className="flex min-h-screen w-full flex-col overflow-hidden bg-[#333] font-['Liberation_Sans',Arial,sans-serif]">
            <header className="flex h-[15px] items-center border-b border-[#a9a5b0] bg-linear-to-b from-[#ececec] to-[#d6d6d6] px-[6px]">
                <div className="flex flex-1 gap-[5px]">
                    <button aria-label="Close" className="flex h-[9px] w-[9px] items-center justify-center rounded-full bg-[#fc5753]"><span className="h-[3px] w-[3px] rounded-full bg-[#7c0f0c]" /></button>
                    <button aria-label="Minimise" className="h-[9px] w-[9px] rounded-full bg-[#fdb63c]" />
                    <button aria-label="Full screen" className="h-[9px] w-[9px] rounded-full bg-[#30c044]" />
                </div>
                <svg viewBox="0 0 8 10" className="mr-[4px] h-[10px] w-[8px]"><path d="M0 0h5l3 3v7H0z" fill="#7d7d80" /><path d="M1 6h6M2.500 4v4M4 3v6M5.500 5v2" stroke="#ddd" strokeWidth="0.700" /></svg>
                <h1 className="text-[9px] leading-[14px] text-[#444]">Edit: SFX Cellar Weather Pack</h1>
                <div className="flex-1" />
            </header>
            <Toolbar />
            <div className="relative flex flex-1 border-t-[3px] border-[#303336]">
                <div className="w-[5px] shrink-0 border-r-2 border-[#303336] bg-linear-to-b from-[#3a5058] via-[#22383d] to-[#4c5a5c]" />
                <EditWindow />
                <VerticalScroll />
                <div className="w-[2px] shrink-0 bg-[#2a2a2a]" />
                <div className="pointer-events-none absolute inset-y-0 right-[12px] left-[324px]">
                    <span className="absolute top-[2px] h-[20px] w-px bg-[#e0604a]" style={{ left: pct(643) }} />
                    <span className="absolute top-0 left-0 h-[12px] w-[3px] bg-[#3f7fc0]" />
                </div>
            </div>
            <div className="h-[2px] bg-[#333]" />
        </div>
    );
}
